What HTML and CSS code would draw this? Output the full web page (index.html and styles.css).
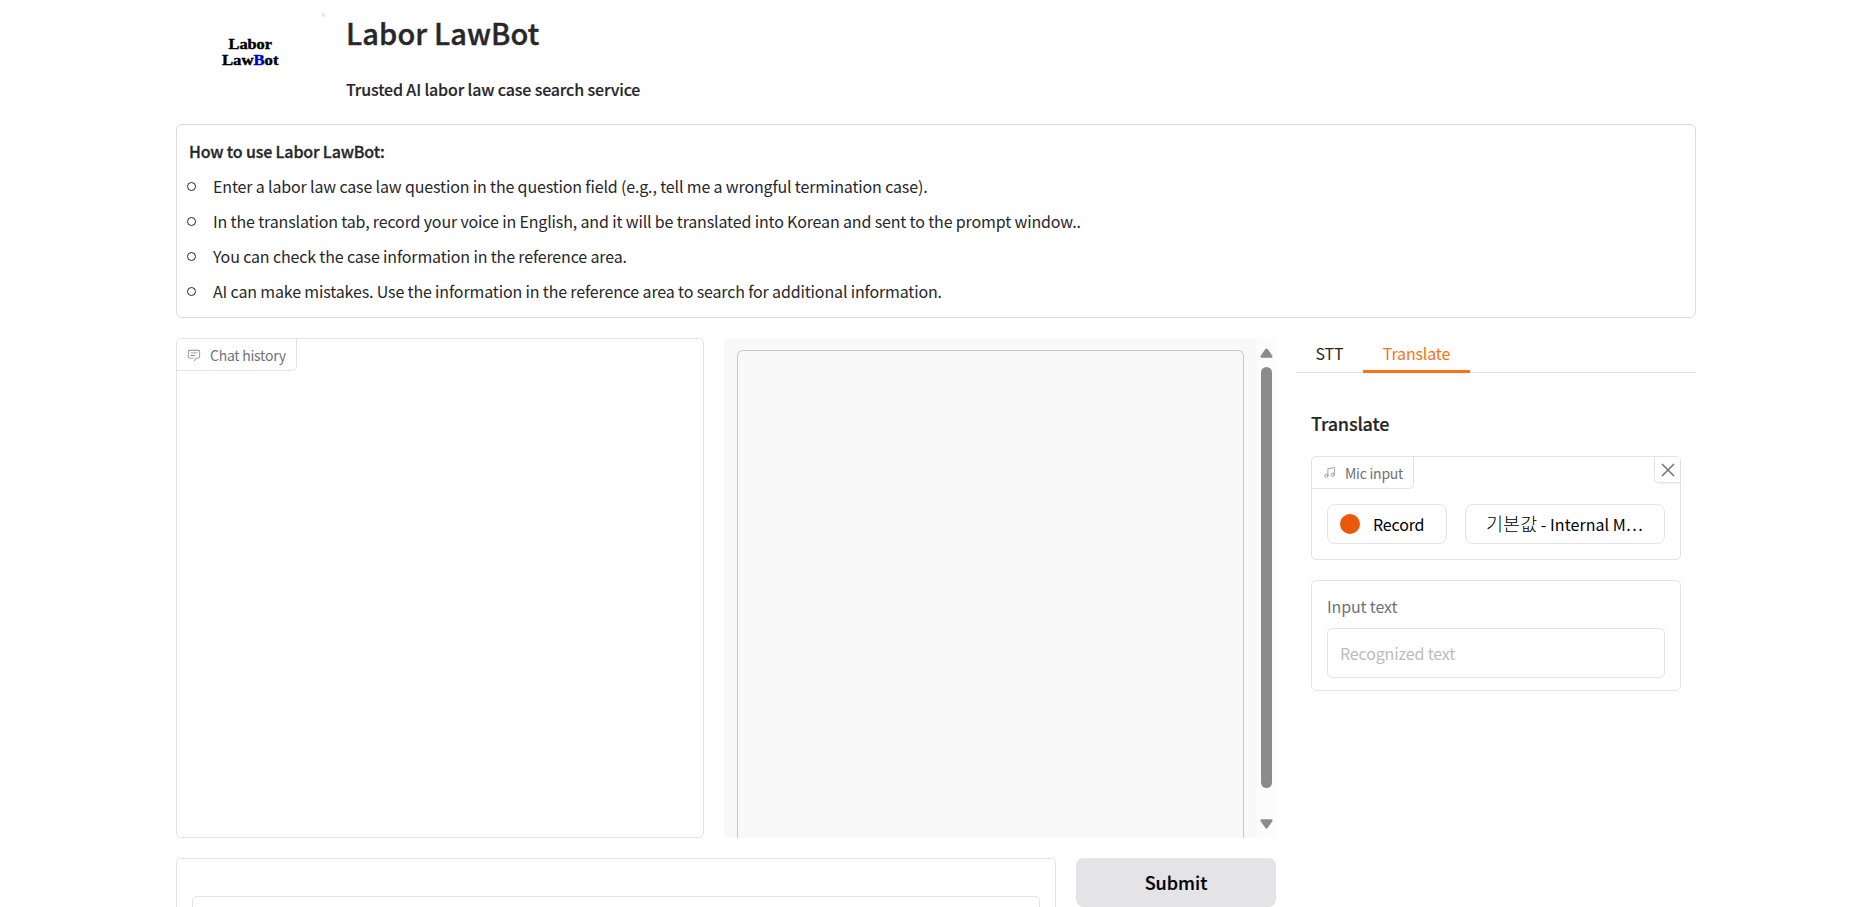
FILE: index.html
```html
<!DOCTYPE html>
<html lang="en">
<head>
<meta charset="utf-8">
<title>Labor LawBot</title>
<link rel="stylesheet" href="styles.css">
</head>
<body>
<main class="app">
  <header class="header">
    <svg class="logo" width="150" height="110" viewBox="0 0 150 110" role="img" aria-label="Labor LawBot">
      <path class="logo-corner" d="M146.500 13c0 2 1.300 3 3 3.200"/>
      <text class="logo-text" x="52.500" y="49" textLength="43.500" lengthAdjust="spacingAndGlyphs">Labor</text>
      <text class="logo-text" x="46" y="65" textLength="56.500" lengthAdjust="spacingAndGlyphs">Law<tspan class="logo-blue">B</tspan>ot</text>
    </svg>
    <div class="heading">
      <h1 class="title">Labor LawBot</h1>
      <p class="subtitle">Trusted AI labor law case search service</p>
    </div>
  </header>

  <section class="guide">
    <p class="guide-title">How to use Labor LawBot:</p>
    <ul class="guide-list">
      <li><span>Enter a labor law case law question in the question field (e.g., tell me a wrongful termination case).</span></li>
      <li><span>In the translation tab, record your voice in English, and it will be translated into Korean and sent to the prompt window..</span></li>
      <li><span>You can check the case information in the reference area.</span></li>
      <li><span>AI can make mistakes. Use the information in the reference area to search for additional information.</span></li>
    </ul>
  </section>

  <div class="columns">
    <div class="main-col">
      <div class="panels">
        <section class="chat">
          <div class="block-label chat-label">
            <svg class="label-icon" width="14" height="14" viewBox="0 0 32 32" fill="currentColor"><path d="M17.740 30 16 29l4-7h6a2 2 0 0 0 2-2V8a2 2 0 0 0-2-2H6a2 2 0 0 0-2 2v12a2 2 0 0 0 2 2h9v2H6a4 4 0 0 1-4-4V8a4 4 0 0 1 4-4h20a4 4 0 0 1 4 4v12a4 4 0 0 1-4 4h-4.840Z"/><path d="M8 10h16v2H8zM8 16h10v2H8z"/></svg>
            <span>Chat history</span>
          </div>
        </section>
        <section class="reference">
          <div class="reference-body"><div class="reference-frame"></div></div>
          <div class="scrollbar">
            <svg width="13" height="10" viewBox="0 0 13 10"><path class="arrow" d="M5.400 1.100Q6.500-.300 7.600 1.100L12.300 7.800Q13 9.600 11.300 9.700H1.700Q0 9.600.700 7.800Z"/></svg>
            <div class="thumb"></div>
            <svg class="arrow-down" width="13" height="10" viewBox="0 0 13 10"><path class="arrow" d="M5.400 8.900Q6.500 10.300 7.600 8.900L12.300 2.200Q13 .400 11.300.300H1.700Q0 .400.700 2.200Z"/></svg>
          </div>
        </section>
      </div>
      <div class="prompt-row">
        <div class="prompt"><div class="prompt-field"></div></div>
        <button class="submit">Submit</button>
      </div>
    </div>

    <aside class="side">
      <nav class="tabs">
        <button class="tab tab-stt">STT</button>
        <button class="tab tab-active">Translate</button>
      </nav>
      <div class="tab-body">
        <h3 class="side-title">Translate</h3>
        <section class="card mic">
          <div class="mic-top">
            <div class="block-label mic-label">
              <svg class="label-icon" width="13" height="13" viewBox="0 0 24 24" fill="none" stroke="currentColor" stroke-width="1.500" stroke-linecap="round" stroke-linejoin="round"><path d="M9 18V5l12-2v13"/><circle cx="6" cy="18" r="3"/><circle cx="18" cy="16" r="3"/></svg>
              <span>Mic input</span>
            </div>
            <button class="close" aria-label="Close"><svg width="14" height="14" viewBox="0 0 14 14"><path class="cross" d="M1 1l12 12M13 1L1 13"/></svg></button>
          </div>
          <div class="mic-controls">
            <button class="record"><span class="dot"></span><span>Record</span></button>
            <div class="device"><span><span class="hangul">기본값</span> - Internal M…</span></div>
          </div>
        </section>
        <section class="card input-card">
          <label class="input-label" for="recognized">Input text</label>
          <input class="input" id="recognized" placeholder="Recognized text">
        </section>
      </div>
    </aside>
  </div>
</main>
</body>
</html>
```
FILE: styles.css
```css
* { box-sizing: border-box; margin: 0; padding: 0; }
html, body { height: 907px; overflow: hidden; background: #fff; }
body { font: 16px/24px "Noto Sans CJK KR", "Noto Sans", sans-serif; letter-spacing: -.15px; color: #27272a; }
button, input { font: inherit; letter-spacing: inherit; background: #fff; border: 0; }
.app { width: 1520px; margin-left: 176px; }

.header { display: flex; height: 124px; }
.logo { flex: none; width: 150px; margin-right: 20px; }
.logo-text { font: 900 14px "Liberation Serif", serif; letter-spacing: 0; stroke: #000; stroke-width: .4px; }
.logo-blue { fill: #0000c8; stroke: #0000c8; }
.logo-corner { fill: none; stroke: #ddd; stroke-width: 1.200px; }
.heading { padding-top: 12px; }
.title { font-size: 29px; line-height: 40px; font-weight: 500; letter-spacing: .1px; -webkit-text-stroke: .4px #27272a; }
.subtitle { font-weight: 500; line-height: 24px; margin-top: 25px; -webkit-text-stroke: .15px #27272a; }

.guide { height: 194px; border: 1px solid #dcdcdc; border-radius: 6px; padding: 14px 12px; }
.guide-title { font-weight: 500; -webkit-text-stroke: .3px #27272a; }
.guide-list { list-style: none; padding-top: 11px; display: grid; row-gap: 11px; }
.guide-list li { display: flex; align-items: center; gap: 17px; }
.guide-list li::before { content: ""; width: 7px; height: 7px; margin-left: -2px; border: 1px solid #27272a; border-radius: 50%; }

.columns { display: flex; gap: 20px; margin-top: 20px; }
.main-col { width: 1100px; }
.panels { display: flex; gap: 20px; height: 500px; }
.chat { width: 528px; border: 1px solid #e4e4e7; border-radius: 5px; }
.block-label { display: flex; align-items: center; color: #71717a; font-size: 14px; letter-spacing: -.25px; height: 32px; border: solid #e4e4e7; border-width: 0 1px 1px 0; border-radius: 0 0 5px 0; }
.label-icon { flex: none; opacity: .8; }
.chat-label { width: 120px; padding-left: 10px; gap: 9px; }

.reference { display: flex; width: 552px; background: #f9f9f9; border-radius: 5px 0 0 0; overflow: hidden; }
.reference-body { width: 533px; padding: 12px 13px 0; }
.reference-frame { height: 488px; border: 1px solid #c8c8c8; border-bottom: 0; border-radius: 6px 6px 0 0; }
.scrollbar { width: 19px; background: #fcfcfc; display: flex; flex-direction: column; align-items: center; padding-top: 10px; }
.arrow { fill: #8b8b8b; }
.thumb { width: 11px; height: 421px; margin-top: 9px; background: #8b8b8b; border-radius: 6px; }
.arrow-down { margin-top: 31px; }

.prompt-row { display: flex; gap: 20px; margin-top: 20px; height: 49px; }
.prompt { width: 880px; border: 1px solid #e4e4e7; border-bottom: 0; border-radius: 5px 5px 0 0; padding: 37px 15px 0; }
.prompt-field { height: 11px; border: 1px solid #e4e4e7; border-bottom: 0; border-radius: 5px 5px 0 0; }
.submit { width: 200px; border-radius: 8px; background: #e4e4e7; font-size: 18px; font-weight: 500; letter-spacing: 0; color: #000; -webkit-text-stroke: .2px #000; padding-bottom: 1px; }

.side { width: 400px; }
.tabs { display: flex; height: 35px; box-shadow: inset 0 -1px #e4e4e7; }
.tab { background: none; line-height: 28px; padding-bottom: 5px; color: #27272a; }
.tab-stt { width: 67px; }
.tab-active { width: 107px; border-bottom: 3px solid #f97316; color: #f97316; padding-bottom: 2px; }
.tab-body { padding: 35px 15px 0; }
.side-title { font-size: 18px; line-height: 30px; font-weight: 500; height: 48px; -webkit-text-stroke: .2px #27272a; }
.card { border: 1px solid #e4e4e7; border-radius: 5px; width: 370px; }
.mic { height: 104px; }
.mic-top { display: flex; justify-content: space-between; align-items: flex-start; }
.mic-label { width: 102px; padding-left: 11px; gap: 9px; }
.close { display: flex; width: 26px; height: 26px; align-items: center; justify-content: center; border: solid #e4e4e7; border-width: 0 0 1px 1px; border-radius: 0 0 0 5px; box-shadow: 0 1px 2px rgba(0,0,0,.06); }
.cross { stroke: #71717a; stroke-width: 1.500px; fill: none; }
.mic-controls { display: flex; gap: 18px; padding: 15px 15px 0; }
.record, .device { height: 40px; border: 1px solid #e4e4e7; border-radius: 8px; color: #000; display: flex; align-items: center; }
.record { width: 120px; padding-left: 12px; gap: 13px; }
.dot { width: 20px; height: 20px; border-radius: 50%; background: #ea580c; }
.device { width: 200px; padding-left: 20px; white-space: nowrap; letter-spacing: .05px; }
.hangul { font-size: 18.500px; font-weight: 300; line-height: 20px; }
.input-card { height: 111px; margin-top: 20px; padding: 13px 15px; }
.input-label { display: block; color: #71717a; height: 34px; }
.input { display: block; width: 338px; height: 50px; border: 1px solid #e4e4e7; border-radius: 5px; padding: 0 12px; }
.input::placeholder { color: #bbbbc1; opacity: 1; }
```
